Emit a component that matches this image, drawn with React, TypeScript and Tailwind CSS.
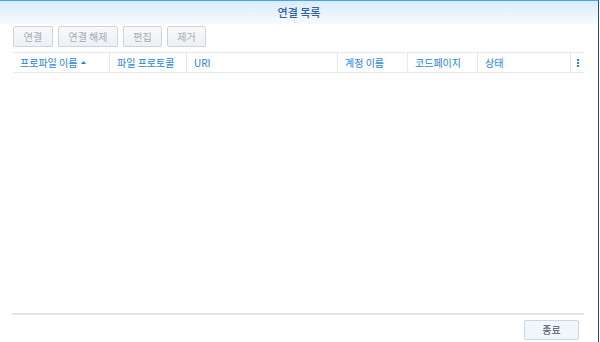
import React from "react";

const columns = [
  { label: "프로파일 이름", width: "w-[97px]", sort: true },
  { label: "파일 프로토콜", width: "w-[77px]" },
  { label: "URI", width: "w-[151px]" },
  { label: "계정 이름", width: "w-[70px]" },
  { label: "코드페이지", width: "w-[70px]" },
  { label: "상태", width: "w-[93px]" },
];

const tools = [
  { label: "연결", width: "w-[40px]" },
  { label: "연결 해제", width: "w-[60px]" },
  { label: "편집", width: "w-[39px]" },
  { label: "제거", width: "w-[39px]" },
];

export default function App() {
  return (
    <div
      className="w-[600px] h-[342px] bg-white flex"
      style={{ fontFamily: '"Noto Sans CJK KR", "Liberation Sans", sans-serif' }}
    >
      <div className="w-[599px] h-full flex flex-col border-t border-[#4d9fe6] border-r border-r-[#1f4f82]">
        {/* title bar */}
        <div className="h-[23px] shrink-0 bg-gradient-to-b from-[#d9ecfc] to-[#f8fbff] flex items-center justify-center">
          <span className="text-[11px] font-medium text-[#2c62a8] leading-none">연결 목록</span>
        </div>

        {/* toolbar */}
        <div className="flex gap-[5px] pl-[13px] pt-[2px]">
          {tools.map((t) => (
            <button
              key={t.label}
              className={`${t.width} h-[21px] rounded-[2px] border border-[#cdd4db] bg-gradient-to-b from-[#f7f8fa] to-[#eef1f4] text-[10px] text-[#a3abb4] leading-none`}
            >
              {t.label}
            </button>
          ))}
        </div>

        {/* table header */}
        <div className="mt-[5px] ml-[13px] w-[571px] h-[21px] flex border-t border-b border-[#e4e9ee]">
          {columns.map((c) => (
            <div
              key={c.label}
              className={`${c.width} h-full flex items-center pl-[7px] border-r border-[#e4e9ee] text-[10px] text-[#1d83dd] leading-none`}
            >
              {c.label}
              {c.sort && (
                <svg width="5" height="3" viewBox="0 0 5 3" className="ml-[4px]">
                  <polygon points="2.5,0 5,3 0,3" fill="#1d83dd" />
                </svg>
              )}
            </div>
          ))}
          <div className="flex-1 flex items-center justify-center">
            <svg width="2" height="8" viewBox="0 0 2 8">
              <rect x="0" y="0" width="2" height="2" fill="#1d83dd" />
              <rect x="0" y="3" width="2" height="2" fill="#1d83dd" />
              <rect x="0" y="6" width="2" height="2" fill="#1d83dd" />
            </svg>
          </div>
        </div>

        <div className="flex-1" />

        {/* footer */}
        <div className="ml-[12px] w-[572px] border-t-2 border-[#e3e6e9]" />
        <div className="flex justify-end pr-[19px] pt-[5px] pb-[2px]">
          <button className="w-[55px] h-[20px] rounded-[2px] border border-[#c9d6e3] bg-[#f1f6fb] text-[10px] text-[#4a5560] leading-none">
            종료
          </button>
        </div>
      </div>
    </div>
  );
}
